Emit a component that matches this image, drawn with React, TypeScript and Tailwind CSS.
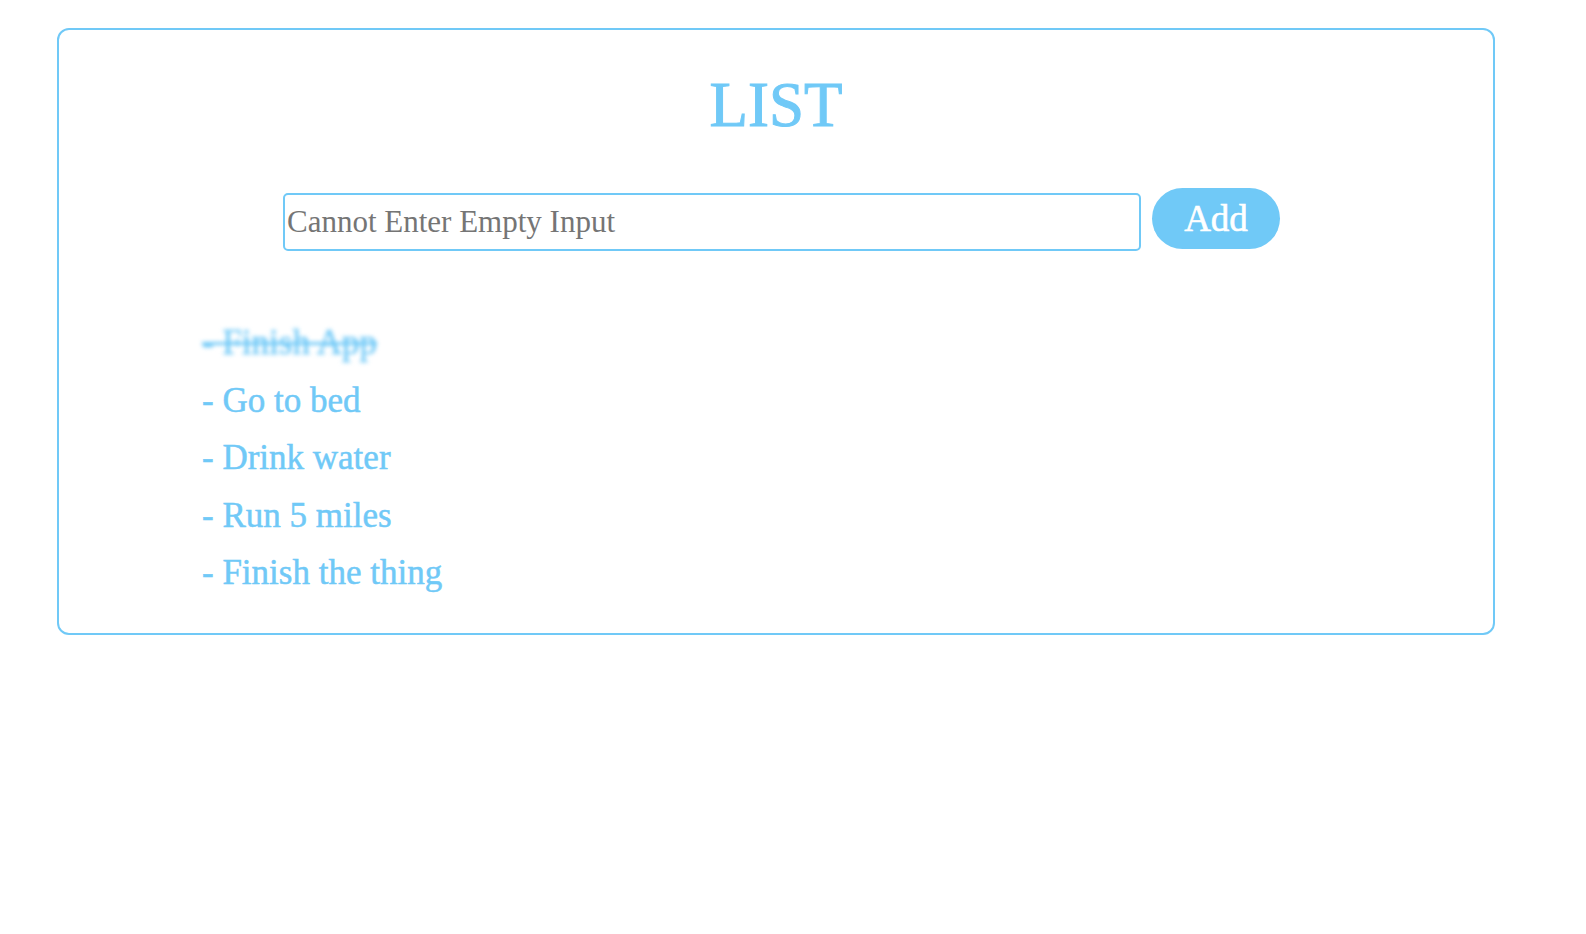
import React, { useState } from 'react';

interface Todo {
  id: number;
  text: string;
  done: boolean;
}

const initialTodos: Todo[] = [
  { id: 1, text: 'Finish App', done: true },
  { id: 2, text: 'Go to bed', done: false },
  { id: 3, text: 'Drink water', done: false },
  { id: 4, text: 'Run 5 miles', done: false },
  { id: 5, text: 'Finish the thing', done: false },
];

const App: React.FC = () => {
  const [todos, setTodos] = useState<Todo[]>(initialTodos);
  const [value, setValue] = useState('');

  const addTodo = () => {
    if (!value.trim()) return;
    setTodos([...todos, { id: Date.now(), text: value, done: false }]);
    setValue('');
  };

  const toggle = (id: number) =>
    setTodos(todos.map((t) => (t.id === id ? { ...t, done: !t.done } : t)));

  return (
    <div className="min-h-screen bg-white pt-[28px] font-['Liberation_Serif',serif]">
      <div className="ml-[57px] w-[1438px] rounded-xl border-2 border-[#70c9f7] pb-[31px]">
        {/* Title */}
        <h1 className="mt-[44px] text-center text-[63px] leading-none text-[#70c9f7] [-webkit-text-stroke:1px_#70c9f7]">
          LIST
        </h1>

        {/* Input row */}
        <div className="mt-[51px] flex items-start pl-[224px]">
          <input
            type="text"
            value={value}
            onChange={(e) => setValue(e.target.value)}
            placeholder="Cannot Enter Empty Input"
            className="mt-[5px] h-[58px] w-[858px] rounded-[5px] border-2 border-[#70c9f7] px-[2px] text-[31px] text-[#333] outline-none placeholder:text-[#757575]"
          />
          <button
            type="button"
            onClick={addTodo}
            className="ml-[11px] h-[61px] w-[128px] rounded-full bg-[#70c9f7] text-[37px] leading-none text-white [-webkit-text-stroke:0.6px_#ffffff]"
          >
            Add
          </button>
        </div>

        {/* Todo list */}
        <ul className="mt-[63px] pl-[143px]">
          {todos.map((todo) => (
            <li
              key={todo.id}
              onClick={() => toggle(todo.id)}
              className={
                todo.done
                  ? 'cursor-pointer text-[35px] leading-[57.5px] text-[#70c9f7] line-through blur-[2px] [-webkit-text-stroke:0.5px_#70c9f7]'
                  : 'cursor-pointer text-[35px] leading-[57.5px] text-[#70c9f7] [-webkit-text-stroke:0.5px_#70c9f7]'
              }
            >
              - {todo.text}
            </li>
          ))}
        </ul>
      </div>
    </div>
  );
};

export default App;
